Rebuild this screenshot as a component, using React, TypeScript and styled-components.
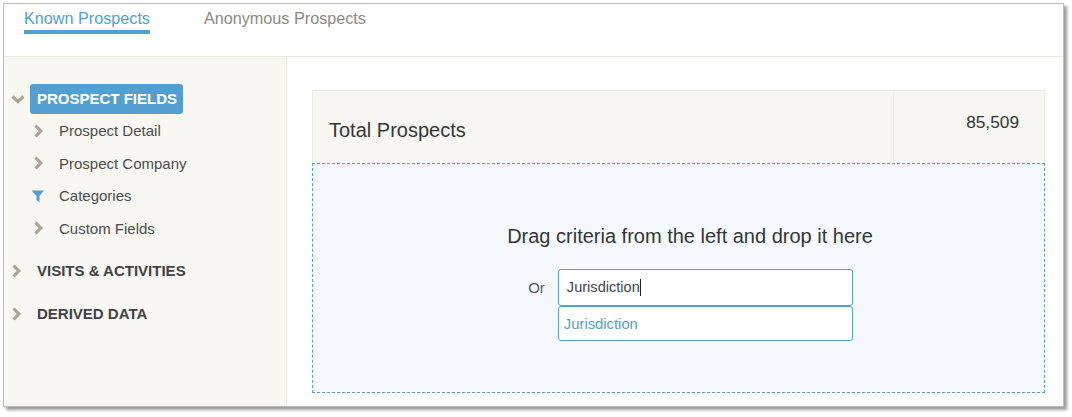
import styled, { createGlobalStyle } from 'styled-components'

const GlobalStyle = createGlobalStyle`
  html, body {
    margin: 0;
    padding: 0;
    background: #fff;
    font-family: "Liberation Sans", Arial, sans-serif;
  }
`

const Page = styled.div`
  width: 1072px;
  height: 417px;
  padding: 3px 0 0 3px;
  box-sizing: border-box;
  overflow: hidden;
`

const Frame = styled.div`
  width: 1061px;
  height: 404px;
  box-sizing: border-box;
  border: 1px solid #bdbdbd;
  background: #fff;
  box-shadow: 3px 3px 3px #9a9a9a;
  display: flex;
  flex-direction: column;
`

const Tabs = styled.div`
  height: 53px;
  flex: none;
  box-sizing: border-box;
  border-bottom: 1px solid #ece9dc;
  display: flex;
  gap: 54px;
  padding-left: 20px;
`

const Tab = styled.div<{ $active?: boolean }>`
  height: 30px;
  box-sizing: border-box;
  padding-top: 5px;
  font-size: 16.2px;
  line-height: 18px;
  color: ${(p) => (p.$active ? '#529fd0' : '#8a8a84')};
  border-bottom: ${(p) => (p.$active ? '4px solid #529fd0' : 'none')};
`

const Body = styled.div`
  flex: 1;
  display: flex;
  min-height: 0;
`

const Sidebar = styled.div`
  width: 283px;
  flex: none;
  box-sizing: border-box;
  background: #f8f7f2;
  border-right: 1px solid #ece9dc;
  padding-top: 27px;
`

const SectionRow = styled.div<{ $gap?: number }>`
  display: flex;
  align-items: center;
  padding-left: 6px;
  margin-top: ${(p) => p.$gap ?? 0}px;
`

const Caret = styled.svg`
  width: 14px;
  height: 14px;
  flex: none;
`

const ActiveSection = styled.div`
  margin-left: 6px;
  height: 30px;
  padding: 0 6px 0 7px;
  border-radius: 3px;
  background: #529fd0;
  color: #fff;
  font-size: 15px;
  font-weight: 700;
  line-height: 30px;
`

const Section = styled.div`
  margin-left: 13px;
  color: #3f4247;
  font-size: 15px;
  font-weight: 700;
  line-height: 18px;
`

const Items = styled.div`
  display: flex;
  flex-direction: column;
  padding-left: 28px;
  padding-top: 0.4px;
`

const Item = styled.div`
  height: 32.6px;
  display: flex;
  align-items: center;
  gap: 13px;
  color: #4b4d50;
  font-size: 15px;
`

const Main = styled.div`
  flex: 1;
  padding: 33px 18px 0 25px;
`

const Totals = styled.div`
  display: flex;
  height: 73px;
  box-sizing: border-box;
  background: #f8f6f0;
  border: 1px solid #ece9dc;
  border-bottom: none;
`

const TotalLabel = styled.div`
  width: 581px;
  box-sizing: border-box;
  border-right: 1px solid #ece9dc;
  padding: 28px 0 0 16px;
  font-size: 20px;
  line-height: 22px;
  color: #333639;
`

const TotalValue = styled.div`
  flex: 1;
  padding: 21px 25px 0 0;
  text-align: right;
  font-size: 17.3px;
  line-height: 20px;
  color: #333639;
`

const DropZone = styled.div`
  height: 230px;
  box-sizing: border-box;
  background: #f5f9fe;
  border: 1px dashed #529fd0;
  padding-top: 61px;
  display: flex;
  flex-direction: column;
  align-items: center;
`

const Hint = styled.div`
  font-size: 20px;
  line-height: 22px;
  color: #333639;
  margin-left: 23px;
`

const Picker = styled.div`
  display: flex;
  gap: 13px;
  margin-top: 22px;
  margin-left: 24px;
`

const OrLabel = styled.div`
  font-size: 15px;
  line-height: 37px;
  color: #55575a;
`

const PickerColumn = styled.div`
  width: 295px;
  display: flex;
  flex-direction: column;
`

const SearchBox = styled.div`
  height: 37px;
  box-sizing: border-box;
  background: #fff;
  border: 1px solid #529fd0;
  border-radius: 3px;
  padding-left: 8px;
  font-size: 14.6px;
  line-height: 35px;
  color: #44474a;
`

const Cursor = styled.span`
  display: inline-block;
  width: 1px;
  height: 17px;
  background: #222;
  vertical-align: -4px;
`

const Suggestion = styled.div`
  height: 35px;
  box-sizing: border-box;
  background: #fff;
  border: 1px solid #529fd0;
  border-radius: 3px;
  padding-left: 5px;
  font-size: 14.8px;
  line-height: 35px;
  color: #529fd0;
`

const ChevronRight = () => (
  <Caret viewBox="0 0 14 14">
    <path d="M3.5 1.5 L8.8 7 L3.5 12.5" fill="none" stroke="#aca391" strokeWidth="3.2" />
  </Caret>
)

const ChevronDown = () => (
  <Caret viewBox="0 0 14 14">
    <path d="M2.5 4.5 L8 9.5 L13.5 4.5" fill="none" stroke="#aca391" strokeWidth="3.2" />
  </Caret>
)

const Funnel = () => (
  <Caret viewBox="0 0 14 14">
    <path d="M-0.5 1.5 H12 L7.5 7 V13.5 L4.5 11 V7 Z" fill="#529fd0" />
  </Caret>
)

const fields = [
  { label: 'Prospect Detail', icon: <ChevronRight /> },
  { label: 'Prospect Company', icon: <ChevronRight /> },
  { label: 'Categories', icon: <Funnel /> },
  { label: 'Custom Fields', icon: <ChevronRight /> },
]

export default function App() {
  return (
    <Page>
      <GlobalStyle />
      <Frame>
        <Tabs>
          <Tab $active>Known Prospects</Tab>
          <Tab>Anonymous Prospects</Tab>
        </Tabs>
        <Body>
          <Sidebar>
            <SectionRow>
              <ChevronDown />
              <ActiveSection>PROSPECT FIELDS</ActiveSection>
            </SectionRow>
            <Items>
              {fields.map((f) => (
                <Item key={f.label}>
                  {f.icon}
                  {f.label}
                </Item>
              ))}
            </Items>
            <SectionRow $gap={17.6}>
              <ChevronRight />
              <Section>VISITS &amp; ACTIVITIES</Section>
            </SectionRow>
            <SectionRow $gap={25}>
              <ChevronRight />
              <Section>DERIVED DATA</Section>
            </SectionRow>
          </Sidebar>
          <Main>
            <Totals>
              <TotalLabel>Total Prospects</TotalLabel>
              <TotalValue>85,509</TotalValue>
            </Totals>
            <DropZone>
              <Hint>Drag criteria from the left and drop it here</Hint>
              <Picker>
                <OrLabel>Or</OrLabel>
                <PickerColumn>
                  <SearchBox>
                    Jurisdiction
                    <Cursor />
                  </SearchBox>
                  <Suggestion>Jurisdiction</Suggestion>
                </PickerColumn>
              </Picker>
            </DropZone>
          </Main>
        </Body>
      </Frame>
    </Page>
  )
}
